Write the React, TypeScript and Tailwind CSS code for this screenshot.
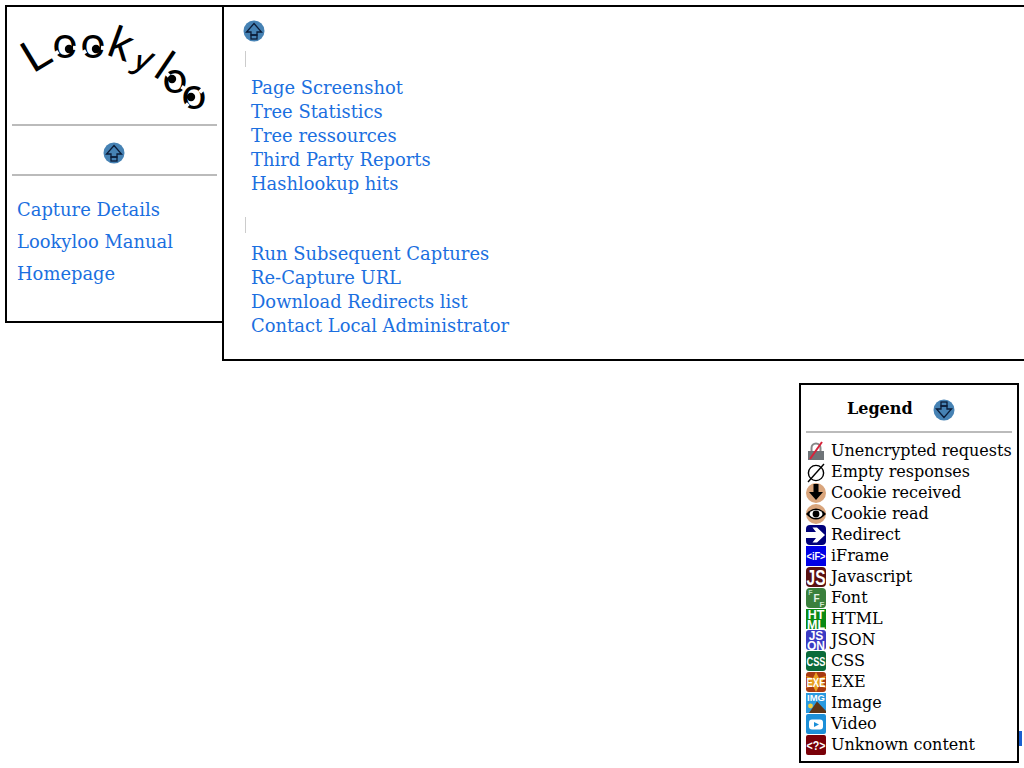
import React from "react";

const SERIF = "font-['DejaVu_Serif',serif]";
const SANS = "'Liberation Sans', sans-serif";

function ArrowBadge({ down = false }: { down?: boolean }) {
  return (
    <svg width="22" height="22" viewBox="0 0 22 22" className="block">
      <circle cx="11" cy="11" r="10.5" fill="#4682b4" />
      <g transform={down ? "rotate(180 11 11)" : undefined} fill="none" stroke="#0b1c38" strokeWidth="1.3">
        <path d="M11 3.5 L18.5 12 H14 V15 H8 V12 H3.5 Z" />
        <rect x="8" y="15" width="6" height="4" />
      </g>
    </svg>
  );
}

// one ring of the logo: a letter o with a pupil and two small breaks in the ring
function Eye({ x, y, gaps, p }: { x: number; y: number; gaps: [number, number]; p: [number, number] }) {
  return (
    <g transform={`translate(${x} ${y})`}>
      <text x="0" y="11" textAnchor="middle" fontFamily="Lato, sans-serif" fontSize="44" fill="#000">o</text>
      {gaps.map((g) => (
        <rect key={g} x="-2" y="-14" width="4" height="6" fill="#fff" transform={`rotate(${g})`} />
      ))}
      <circle cx={p[0]} cy={p[1]} r="4.2" fill="#000" />
    </g>
  );
}

function Logo() {
  const letter = (t: string, x: number, y: number, a: number, s: number, dx = 0, anchor = "start") => (
    <text transform={`translate(${x} ${y}) rotate(${a})`} x={dx} textAnchor={anchor} fontFamily={SANS} fontSize={s} fill="#000">
      {t}
    </text>
  );
  return (
    <svg width="215" height="117" viewBox="0 0 215 117" className="block overflow-visible">
      {letter("L", 29, 65, -31, 46, -3.5)}
      <Eye x={58} y={40} gaps={[-125, 95]} p={[4, 2]} />
      <Eye x={86} y={40} gaps={[-120, 95]} p={[3, 2]} />
      {letter("y", 123, 58, 25, 38)}
      {/* the logo's y has a short left arm */}
      <rect x="127" y="33" width="16" height="15" fill="#fff" />
      {letter("k", 103, 49, 20, 45, -5)}
      {letter("l", 149, 71, 34, 44.5, 0, "middle")}
      <Eye x={168} y={75} gaps={[-45, 125]} p={[-3, -3]} />
      <Eye x={187} y={91} gaps={[45, -135]} p={[-3, -1]} />
    </svg>
  );
}

const Label = ({ y, size, children, fill = "#fff", x = 10, fit }: { y: number; size: number; children: React.ReactNode; fill?: string; x?: number; fit?: number }) => (
  <text x={x} y={y} textAnchor="middle" fontFamily={SANS} fontWeight="700" fontSize={size} fill={fill} textLength={fit} lengthAdjust={fit ? "spacingAndGlyphs" : undefined}>
    {children}
  </text>
);

const icons: Record<string, React.ReactNode> = {
  lock: (
    <>
      <path d="M5.5 10 V7 a4.5 4.5 0 0 1 9 0 V10" fill="none" stroke="#888" strokeWidth="2" />
      <rect x="2" y="10" width="16" height="9" fill="#6f7478" />
      <path d="M16 1 L4 18" stroke="#d8233a" strokeWidth="2" />
    </>
  ),
  empty: (
    <>
      <circle cx="10" cy="11" r="7.6" fill="none" stroke="#000" strokeWidth="1.4" />
      <path d="M18 2 L2 20" stroke="#000" strokeWidth="1.4" />
    </>
  ),
  cookieIn: (
    <>
      <circle cx="10" cy="10" r="10" fill="#d9a57c" />
      <path d="M7.5 1 H12.5 V9 H17 L10 17 L3 9 H7.5 Z" fill="#000" />
    </>
  ),
  cookieRead: (
    <>
      <circle cx="10" cy="10" r="10" fill="#d9a57c" />
      <path d="M0 10 Q10 -1 20 10 Q10 21 0 10 Z" fill="#000" />
      <ellipse cx="10" cy="10" rx="6.5" ry="4" fill="#fff" />
      <circle cx="10" cy="10" r="3.4" fill="#000" />
    </>
  ),
  redirect: (
    <>
      <rect width="20" height="20" rx="4" fill="#00007a" />
      <path d="M0 7 H10 L6.5 2.5 H11 L19 10 L11 17.5 H6.5 L10 13 H0 Z" fill="#fff" />
    </>
  ),
  iframe: (
    <>
      <rect width="20" height="20" fill="#0000e6" />
      <Label y={14} size={10} fit={19}>{"<iF>"}</Label>
    </>
  ),
  js: (
    <>
      <rect width="20" height="20" rx="4" fill="#5a1212" />
      <Label y={18} size={22} fit={19}>JS</Label>
    </>
  ),
  font: (
    <>
      <rect width="20" height="20" rx="4" fill="#3a803c" />
      <Label x={4.5} y={7} size={7} fill="#b8d8b8">F</Label>
      <Label x={10.5} y={14} size={10} fill="#e8f4e8">F</Label>
      <Label x={16} y={19} size={8} fill="#d0e8d0">F</Label>
    </>
  ),
  html: (
    <>
      <rect width="20" height="20" fill="#0a8a14" />
      <Label y={9.5} size={12.5}>HT</Label>
      <Label y={19.5} size={12.5}>ML</Label>
    </>
  ),
  json: (
    <>
      <rect width="20" height="20" rx="3" fill="#3b3bc4" />
      <Label y={9.5} size={12}>JS</Label>
      <Label y={19.5} size={12}>ON</Label>
    </>
  ),
  css: (
    <>
      <rect width="20" height="20" rx="3" fill="#0a6b3a" />
      <Label y={14.5} size={12} fit={19}>CSS</Label>
    </>
  ),
  exe: (
    <>
      <rect width="20" height="20" rx="3" fill="#a83a12" />
      <path d="M10 0 L13 6 L20 4 L16 10 L20 16 L13 14 L10 20 L7 14 L0 16 L4 10 L0 4 L7 6 Z" fill="#e8a020" />
      <Label y={14.5} size={12} fit={19}>EXE</Label>
    </>
  ),
  image: (
    <>
      <rect width="20" height="20" fill="#2a9ae0" />
      <Label y={8} size={9} fit={18}>IMG</Label>
      <circle cx="4.5" cy="13" r="2.4" fill="#f4d040" />
      <path d="M3 20 L11 8.5 L20 18 V20 Z" fill="#5f3416" />
    </>
  ),
  video: (
    <>
      <rect width="20" height="20" rx="2" fill="#1c8fd8" />
      <rect x="3" y="5.5" width="14" height="10" rx="3" fill="#fff" />
      <path d="M8 8 L13 10.5 L8 13 Z" fill="#1c8fd8" />
    </>
  ),
  unknown: (
    <>
      <rect width="20" height="20" rx="2" fill="#7a0008" />
      <Label y={14.5} size={12} fit={19}>{"<?>"}</Label>
    </>
  ),
};

const legend = [
  ["lock", "Unencrypted requests"],
  ["empty", "Empty responses"],
  ["cookieIn", "Cookie received"],
  ["cookieRead", "Cookie read"],
  ["redirect", "Redirect"],
  ["iframe", "iFrame"],
  ["js", "Javascript"],
  ["font", "Font"],
  ["html", "HTML"],
  ["json", "JSON"],
  ["css", "CSS"],
  ["exe", "EXE"],
  ["image", "Image"],
  ["video", "Video"],
  ["unknown", "Unknown content"],
];

const link = "text-[#1b6fe0] no-underline";

export default function App() {
  return (
    <div className={`relative w-[1024px] h-[768px] overflow-hidden bg-white pt-[5px] pl-[5px] ${SERIF}`}>
      <div className="flex items-start w-[1200px]">
        <div className="w-[217px] h-[318px] border-2 border-r-0 border-black flex flex-col px-[5px]">
          <div className="h-[117px] -mx-[5px]">
            <Logo />
          </div>
          <hr className="border-0 h-[2px] bg-[#bbbbbb]" />
          <div className="h-[48px] flex items-center justify-center pt-[6px] pr-[1px]">
            <ArrowBadge />
          </div>
          <hr className="border-0 h-[2px] bg-[#bbbbbb]" />
          <div className={`pl-[5px] pt-[22px] flex flex-col gap-[8px] text-[17.92px] leading-[24px] ${link}`}>
            <a>Capture Details</a>
            <a>Lookyloo Manual</a>
            <a>Homepage</a>
          </div>
        </div>
        <div className="w-[900px] h-[356px] border-2 border-black pl-[19px] pt-[13px]">
          <ArrowBadge />
          <div className="w-px h-[16px] bg-[#cccccc] ml-[2px] mt-[9px]" />
          <div className={`pl-[8px] pt-[9px] flex flex-col text-[17.92px] leading-[24px] ${link}`}>
            <a>Page Screenshot</a>
            <a>Tree Statistics</a>
            <a>Tree ressources</a>
            <a>Third Party Reports</a>
            <a>Hashlookup hits</a>
          </div>
          <div className="w-px h-[16px] bg-[#cccccc] ml-[2px] mt-[21px]" />
          <div className={`pl-[8px] pt-[9px] flex flex-col text-[17.92px] leading-[24px] ${link}`}>
            <a>Run Subsequent Captures</a>
            <a>Re-Capture URL</a>
            <a>Download Redirects list</a>
            <a>Contact Local Administrator</a>
          </div>
        </div>
      </div>
      <div className="flex justify-end pr-[5px] mt-[22px]">
        <div className="relative w-[220px] h-[380px] border-2 border-black bg-white px-[5px] text-black text-[16px]">
          <div className="h-[46px] flex items-center">
            <span className="ml-[41px] mt-[2px] font-bold">Legend</span>
            <span className="ml-[20px] mt-[4px]">
              <ArrowBadge down />
            </span>
          </div>
          <hr className="border-0 h-[2px] bg-[#bbbbbb]" />
          <div className="flex flex-col mt-[7px]">
            {legend.map(([k, t]) => (
              <div key={k} className="h-[21px] flex items-center gap-[5px] whitespace-nowrap">
                <svg width="20" height="20" viewBox="0 0 20 20" className="shrink-0 overflow-visible">
                  {icons[k]}
                </svg>
                <span>{t}</span>
              </div>
            ))}
          </div>
        </div>
      </div>
      <div className="absolute left-[1019px] top-[731px] w-[3px] h-[15px] bg-[#1a5fd0]" />
    </div>
  );
}
